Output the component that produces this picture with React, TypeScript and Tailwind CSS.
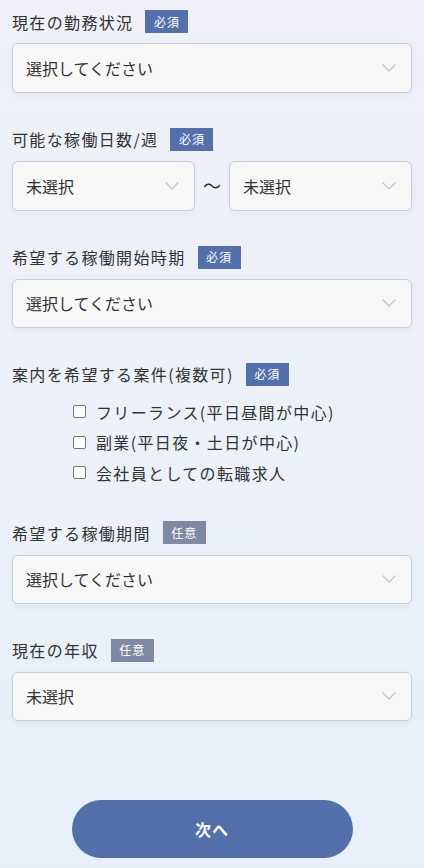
import React from "react";

type BadgeProps = { required?: boolean };

const Badge = ({ required = true }: BadgeProps) => (
  <span
    className={`ml-3 inline-flex h-[23px] w-[43px] items-center justify-center text-[12px] tracking-[1px] text-white ${
      required ? "bg-[#5470ab]" : "bg-[#7e8aa3]"
    }`}
  >
    {required ? "必須" : "任意"}
  </span>
);

const Label = ({ text, required = true }: { text: string; required?: boolean }) => (
  <div className="flex h-[23px] items-center">
    <span className="text-[16px] tracking-[1.35px] text-[#333]">{text}</span>
    <Badge required={required} />
  </div>
);

const Chevron = () => (
  <svg width="14" height="8" viewBox="0 0 14 8" fill="none">
    <path d="M1 1l6 6 6-6" stroke="#bcc3d3" strokeWidth="1.4" strokeLinecap="round" strokeLinejoin="round" />
  </svg>
);

const Select = ({ value, className = "" }: { value: string; className?: string }) => (
  <div
    className={`flex h-[49.5px] items-center justify-between rounded-[6px] border border-[#c6cbda] bg-[#f7f7f7] pl-[13px] pr-[15px] shadow-[0_2px_6px_rgba(120,135,170,0.12)] ${className}`}
  >
    <span className="text-[16px] text-[#333]">{value}</span>
    <Chevron />
  </div>
);

const Check = ({ text }: { text: string }) => (
  <label className="flex h-[30.5px] items-center">
    <span className="h-[13px] w-[13px] rounded-[2px] border border-[#767676] bg-white" />
    <span className="ml-[10px] text-[16px] tracking-[1.35px] text-[#333]">{text}</span>
  </label>
);

export default function App() {
  return (
    <div
      className="min-h-[868px] w-full bg-gradient-to-b from-[#f0f1f8] to-[#e8f0fb] px-3 pt-[10px] pb-[9px]"
      style={{ fontFamily: '"Noto Sans CJK JP", "Noto Sans", sans-serif' }}
    >
      {/* 現在の勤務状況 */}
      <Label text="現在の勤務状況" />
      <Select value="選択してください" className="mt-[10px]" />

      {/* 可能な稼働日数/週 */}
      <div className="mt-[35px]">
        <Label text="可能な稼働日数/週" />
        <div className="mt-[10.5px] flex items-center">
          <Select value="未選択" className="w-[183px]" />
          <span className="flex w-[34px] justify-center text-[18px] text-[#333]">〜</span>
          <Select value="未選択" className="w-[183px]" />
        </div>
      </div>

      {/* 希望する稼働開始時期 */}
      <div className="mt-[35px]">
        <Label text="希望する稼働開始時期" />
        <Select value="選択してください" className="mt-[10px]" />
      </div>

      {/* 案内を希望する案件 */}
      <div className="mt-[34.5px]">
        <Label text="案内を希望する案件(複数可)" />
        <div className="mt-[11px] pl-[61px]">
          <Check text="フリーランス(平日昼間が中心)" />
          <Check text="副業(平日夜・土日が中心)" />
          <Check text="会社員としての転職求人" />
        </div>
      </div>

      {/* 希望する稼働期間 */}
      <div className="mt-[33px]">
        <Label text="希望する稼働期間" required={false} />
        <Select value="選択してください" className="mt-[10.5px]" />
      </div>

      {/* 現在の年収 */}
      <div className="mt-[34.5px]">
        <Label text="現在の年収" required={false} />
        <Select value="未選択" className="mt-[10px]" />
      </div>

      <div className="mt-[79px] flex justify-center">
        <button className="h-[58px] w-[281px] rounded-full bg-[#5470ab] text-[16px] font-bold tracking-[1px] text-white">
          次へ
        </button>
      </div>
    </div>
  );
}
